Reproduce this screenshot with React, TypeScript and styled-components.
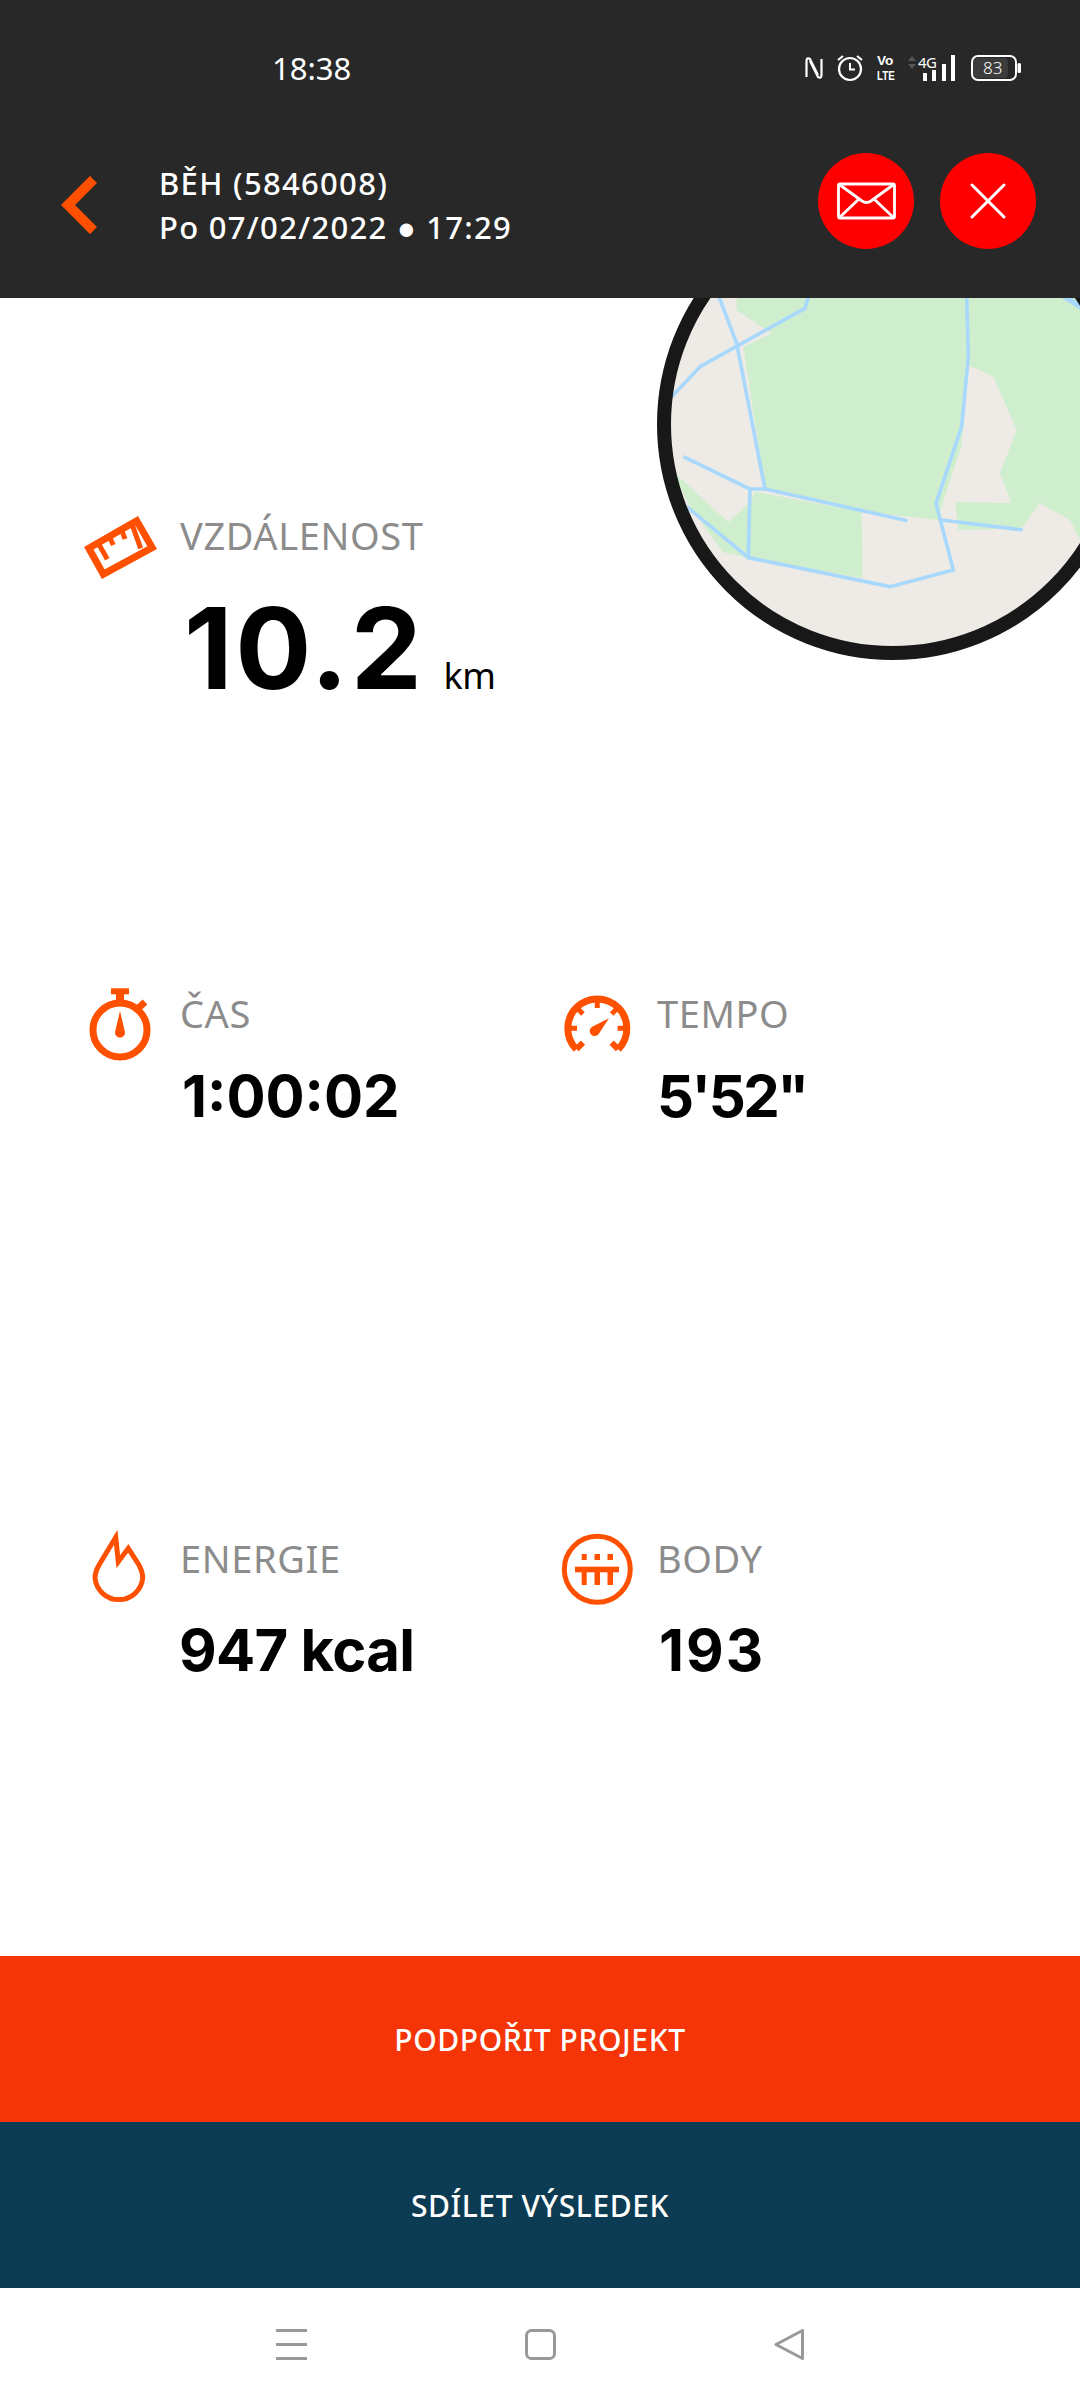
import React from "react";
import styled, { createGlobalStyle } from "styled-components";

const Global = createGlobalStyle`
  html, body { margin: 0; padding: 0; background: #fff; }
  * { box-sizing: border-box; }
`;

const ORANGE = "#ff5000";
const SANS = `"Noto Sans", "Open Sans", sans-serif`;

const Page = styled.div`
  position: relative;
  width: 1080px;
  height: 2400px;
  display: flex;
  flex-direction: column;
  overflow: hidden;
  background: #fff;
  font-family: ${SANS};
`;

const Header = styled.header`
  position: relative;
  z-index: 2;
  height: 298px;
  flex: none;
  background: #282828;
  color: #fff;
`;

const StatusBar = styled.div`
  height: 136px;
  display: flex;
  align-items: center;
  padding: 0 59px 0 272px;
`;

const Clock = styled.span`
  font-size: 31px;
  line-height: 40px;
  flex: 1;
`;

const StatusIcons = styled.div`
  display: flex;
  align-items: center;
`;

const StatusSvg = styled.svg<{ $ml: number }>`
  display: block;
  margin-left: ${(p) => p.$ml}px;
`;

const VoLte = styled.div<{ $ml: number }>`
  width: 20px;
  height: 30px;
  margin-left: ${(p) => p.$ml}px;
`;

const VoLteLine = styled.span<{ $scale: number }>`
  display: block;
  width: max-content;
  font-family: "Liberation Sans", Arial, sans-serif;
  font-weight: 700;
  font-size: 13px;
  line-height: 15px;
  transform: scaleX(${(p) => p.$scale});
  transform-origin: left center;
`;

const Signal = styled.div<{ $ml: number }>`
  position: relative;
  width: 48px;
  height: 27px;
  margin-left: ${(p) => p.$ml}px;
`;

const NetworkType = styled.span`
  position: absolute;
  left: 10px;
  top: -2px;
  font-size: 15px;
  line-height: 18px;
  letter-spacing: -0.5px;
`;

const Battery = styled.div<{ $ml: number }>`
  position: relative;
  width: 50px;
  height: 26px;
  margin-left: ${(p) => p.$ml}px;
`;

const BatteryLevel = styled.span`
  position: absolute;
  left: 12px;
  top: 1px;
  font-size: 17px;
  line-height: 24px;
  font-weight: 300;
`;

const Toolbar = styled.div`
  height: 130px;
  display: flex;
  align-items: center;
  padding: 0 44px 0 61px;
`;

const Back = styled.svg`
  display: block;
  margin-top: 8px;
`;

const Title = styled.div`
  flex: 1;
  margin: 8px 0 0 62px;
  font-size: 31px;
  line-height: 44px;
  font-weight: 500;
  letter-spacing: 1.3px;
`;

const Round = styled.button<{ $ml?: number }>`
  width: 96px;
  height: 96px;
  border: 0;
  padding: 0;
  border-radius: 50%;
  background: #ff0000;
  margin-left: ${(p) => p.$ml ?? 0}px;
  display: flex;
  align-items: center;
  justify-content: center;
`;

const Main = styled.main`
  position: relative;
  flex: 1;
  overflow: hidden;
  padding: 207px 0 0 80px;
  display: grid;
  grid-template-rows: 478px 545px 1fr;
`;

const MapOverlay = styled.svg`
  position: absolute;
  top: -8px;
  right: 0;
  display: block;
`;

const Row = styled.section`
  display: grid;
  grid-template-columns: 477px 1fr;
  align-items: start;
`;

const Stat = styled.div`
  display: grid;
  grid-template-columns: 80px auto;
  column-gap: 20px;
  justify-content: start;
`;

const IconCell = styled.svg`
  grid-row: 1 / span 2;
  display: block;
  margin-top: 1px;
`;

const Label = styled.div`
  padding-top: 10px;
  font-size: 38px;
  line-height: 40px;
  letter-spacing: 0.6px;
  color: #8c8c8c;
`;

const Value = styled.div<{ $size: number; $mt: number; $ml?: number; $ls?: number }>`
  margin-top: ${(p) => p.$mt}px;
  margin-left: ${(p) => p.$ml ?? 0}px;
  letter-spacing: ${(p) => p.$ls ?? 0}px;
  font-family: Inter, "Liberation Sans", sans-serif;
  font-weight: 700;
  font-size: ${(p) => p.$size}px;
  line-height: ${(p) => p.$size}px;
  color: #000;
  white-space: nowrap;
`;

const Unit = styled.span`
  margin-left: 19px;
  letter-spacing: -0.5px;
  font-family: ${SANS};
  font-weight: 400;
  font-size: 36px;
`;

const ActionBar = styled.button<{ $bg: string }>`
  flex: none;
  width: 100%;
  height: 166px;
  border: 0;
  background: ${(p) => p.$bg};
  color: #fff;
  font-family: ${SANS};
  font-size: 30px;
  font-weight: 500;
  letter-spacing: 0.6px;
  display: flex;
  align-items: center;
  justify-content: center;
`;

const NavBar = styled.nav`
  flex: none;
  height: 112px;
  display: flex;
  align-items: flex-start;
  justify-content: center;
  padding-top: 41px;
  gap: 218px;
`;

const teeth = [0, 45, -45, 90, -90];

export default function App() {
  return (
    <Page>
      <Global />
      <Header>
        <StatusBar>
          <Clock>18:38</Clock>
          <StatusIcons>
            <StatusSvg $ml={0} width="18" height="26" viewBox="0 0 18 26" fill="none" stroke="#fff" strokeWidth="2.2">
              <path d="M1.5 22 V6 Q1.5 2 5 4 L13 20" />
              <path d="M16.5 4 V20 Q16.5 24 13 22 L5 6" />
            </StatusSvg>
            <StatusSvg $ml={14} width="26" height="28" viewBox="0 0 26 28" fill="none" stroke="#fff" strokeWidth="2.2">
              <circle cx="13" cy="15" r="11" />
              <path d="M13 9 V15.5 H18" strokeWidth="2" />
              <path d="M1 6 L6 2 M25 6 L20 2" />
            </StatusSvg>
            <VoLte $ml={14}>
              <VoLteLine $scale={1.05}>Vo</VoLteLine>
              <VoLteLine $scale={0.75}>LTE</VoLteLine>
            </VoLte>
            <Signal $ml={11}>
              <svg width="48" height="27" viewBox="0 0 48 27" fill="#fff">
                <path d="M4 1 L8 6 H0 Z M4 14 L8 9 H0 Z" fill="#555" />
                <rect x="15" y="18" width="4" height="8" />
                <rect x="24" y="15" width="4" height="11" />
                <rect x="34" y="9" width="4" height="17" />
                <rect x="43" y="0" width="4" height="26" />
              </svg>
              <NetworkType>4G</NetworkType>
            </Signal>
            <Battery $ml={15}>
              <svg width="50" height="26" viewBox="0 0 50 26" fill="none">
                <rect x="2" y="3" width="35" height="20" rx="4" fill="#3c3c3c" />
                <rect x="1" y="1" width="44" height="24" rx="6" stroke="#fff" strokeWidth="2" />
                <rect x="46.5" y="8" width="3.5" height="10" rx="1.5" fill="#fff" />
              </svg>
              <BatteryLevel>83</BatteryLevel>
            </Battery>
          </StatusIcons>
        </StatusBar>
        <Toolbar>
          <Back width="36" height="58" viewBox="0 0 36 58" fill="none" stroke={ORANGE} strokeWidth="10">
            <path d="M32.5 3.5 L7 29 L32.5 54.5" />
          </Back>
          <Title>
            <div>BĚH (5846008)</div>
            <div>Po 07/02/2022 ● 17:29</div>
          </Title>
          <Round aria-label="e-mail">
            <svg width="96" height="96" viewBox="0 0 96 96" fill="none" stroke="#fff" strokeWidth="2.8">
              <rect x="20.5" y="31" width="56" height="34" rx="1.5" />
              <path d="M22 32 L44 48 Q48.5 51 53 48 L75 32" />
              <path d="M22 64 L41 46 M75 64 L56 46" />
            </svg>
          </Round>
          <Round $ml={26} aria-label="zavřít">
            <svg width="96" height="96" viewBox="0 0 96 96" fill="none" stroke="#fff" strokeWidth="3" strokeLinecap="round">
              <path d="M32 32 L64 64 M64 32 L32 64" />
            </svg>
          </Round>
        </Toolbar>
      </Header>

      <Main>
        <MapOverlay width="440" height="380" viewBox="0 0 1320 1140">
          <defs>
            <clipPath id="disc">
              <circle cx="758" cy="403" r="690" />
            </clipPath>
          </defs>
          <g clipPath="url(#disc)">
            <rect width="1320" height="1140" fill="#eeebe6" />
            <g fill="#cfeecd">
              <path d="M290 0 V60 L395 130 L310 170 L375 595 L665 665 L895 690 L905 650 L965 465 L985 225 L1060 260 L1130 420 L1080 550 L1115 640 L945 635 L955 720 L1145 715 L1200 640 L1290 690 L1330 770 H1400 V0 Z" />
              <path d="M100 545 L265 697 L330 635 L345 605 L665 665 L668 865 L325 803 L250 787 L150 650 Z" />
            </g>
            <g fill="none" stroke="#a9d8fd" strokeWidth="11" strokeLinejoin="round">
              <path d="M235 15 L290 160 L375 597" />
              <path d="M507 15 L495 55 L180 230 L95 320" />
              <path d="M130 500 L330 597 H375 L802 692" />
              <path d="M330 597 L325 800" />
              <path d="M140 650 L325 803 L750 890 L940 840 L888 640 L965 410 L985 200 L980 15" />
              <path d="M905 690 L1148 720" />
              <path d="M1265 15 L1330 55" strokeWidth="16" />
            </g>
          </g>
          <circle cx="758" cy="403" r="686" fill="none" stroke="#181818" strokeWidth="42" />
        </MapOverlay>

        <Row>
          <Stat>
            <IconCell width="80" height="80" viewBox="0 0 80 80" fill="none" stroke={ORANGE}>
              <path d="M8.8 42.3 L56.7 14.8 L72.2 41.7 L23.3 68.2 Z" strokeWidth="7" strokeLinejoin="miter" />
              <path d="M18.3 37.3 L27.3 53.3 M29.3 30.7 L33.3 39 M41.7 24 L45 33 M51.7 17.3 L60.7 42.3" strokeWidth="5" />
            </IconCell>
            <Label>VZDÁLENOST</Label>
            <Value $size={113} $mt={37} $ml={4} $ls={2.5}>
              10.2<Unit>km</Unit>
            </Value>
          </Stat>
        </Row>

        <Row>
          <Stat>
            <IconCell width="80" height="80" viewBox="0 0 80 80" fill="none" stroke={ORANGE}>
              <circle cx="40" cy="46" r="27" strokeWidth="7" />
              <path d="M40 8 V18" strokeWidth="8" />
              <path d="M31 7.3 H49" strokeWidth="6" />
              <path d="M58.5 24 L65 18" strokeWidth="7" />
              <path d="M40 27 L44.7 47 A5 5 0 1 1 35.3 47 Z" fill={ORANGE} stroke="none" />
            </IconCell>
            <Label>ČAS</Label>
            <Value $size={58} $mt={34} $ml={2}>1:00:02</Value>
          </Stat>
          <Stat>
            <IconCell width="80" height="80" viewBox="0 0 80 80" fill="none" stroke={ORANGE}>
              <path d="M19.4 65.2 A29.5 29.5 0 1 1 61.2 65.2" strokeWidth="7" />
              {teeth.map((a) => (
                <line key={a} x1="40.3" y1="15" x2="40.3" y2="24" strokeWidth="5" transform={`rotate(${a} 40.3 44.3)`} />
              ))}
              <line x1="40.3" y1="15" x2="40.3" y2="24" strokeWidth="6" transform="rotate(135 40.3 44.3)" />
              <line x1="40.3" y1="15" x2="40.3" y2="24" strokeWidth="6" transform="rotate(-135 40.3 44.3)" />
              <path d="M52 34.3 L42 49.5 A5 5 0 1 1 35.6 42.5 Z" fill={ORANGE} stroke="none" />
            </IconCell>
            <Label>TEMPO</Label>
            <Value $size={58} $mt={34} $ml={0} $ls={-2.5}>5'52"</Value>
          </Stat>
        </Row>

        <Row>
          <Stat>
            <IconCell width="80" height="80" viewBox="0 0 80 80" fill="none" stroke={ORANGE}>
              <path d="M35.7 8.3 L38.3 32.7 L48.3 19.3 L59 36 Q62.7 43 62.7 49.3 A24 24 0 0 1 15 49.3 Q15 43 19 36 Z" strokeWidth="5" />
            </IconCell>
            <Label>ENERGIE</Label>
            <Value $size={58} $mt={43} $ml={-1} $ls={-0.7}>947 kcal</Value>
          </Stat>
          <Stat>
            <IconCell width="80" height="80" viewBox="0 0 80 80" fill="none">
              <circle cx="40.3" cy="40.3" r="33" stroke={ORANGE} strokeWidth="5" />
              <g fill={ORANGE}>
                <rect x="24.7" y="25" width="5" height="6" />
                <rect x="37.5" y="25" width="5.5" height="6" />
                <rect x="50.5" y="25" width="5.5" height="6" />
                <rect x="18" y="37.7" width="44" height="5.6" />
                <rect x="24.7" y="43" width="5" height="13" />
                <rect x="37.5" y="43" width="5.5" height="13" />
                <rect x="50.5" y="43" width="5.5" height="13" />
              </g>
            </IconCell>
            <Label>BODY</Label>
            <Value $size={58} $mt={43} $ml={2} $ls={2}>193</Value>
          </Stat>
        </Row>
      </Main>

      <ActionBar $bg="#f53507">PODPOŘIT PROJEKT</ActionBar>
      <ActionBar $bg="#0c3c54">SDÍLET VÝSLEDEK</ActionBar>

      <NavBar>
        <svg width="31" height="31" viewBox="0 0 31 31" stroke="#999" strokeWidth="3" fill="none">
          <path d="M0 1.5 H31 M0 15.5 H31 M0 29.5 H31" />
        </svg>
        <svg width="31" height="31" viewBox="0 0 31 31" stroke="#999" strokeWidth="3" fill="none">
          <rect x="1.5" y="1.5" width="28" height="28" rx="5" />
        </svg>
        <svg width="31" height="31" viewBox="0 0 31 31" stroke="#999" strokeWidth="3" fill="none" strokeLinejoin="round">
          <path d="M2 15.5 L28.5 1.5 V29.5 Z" />
        </svg>
      </NavBar>
    </Page>
  );
}
